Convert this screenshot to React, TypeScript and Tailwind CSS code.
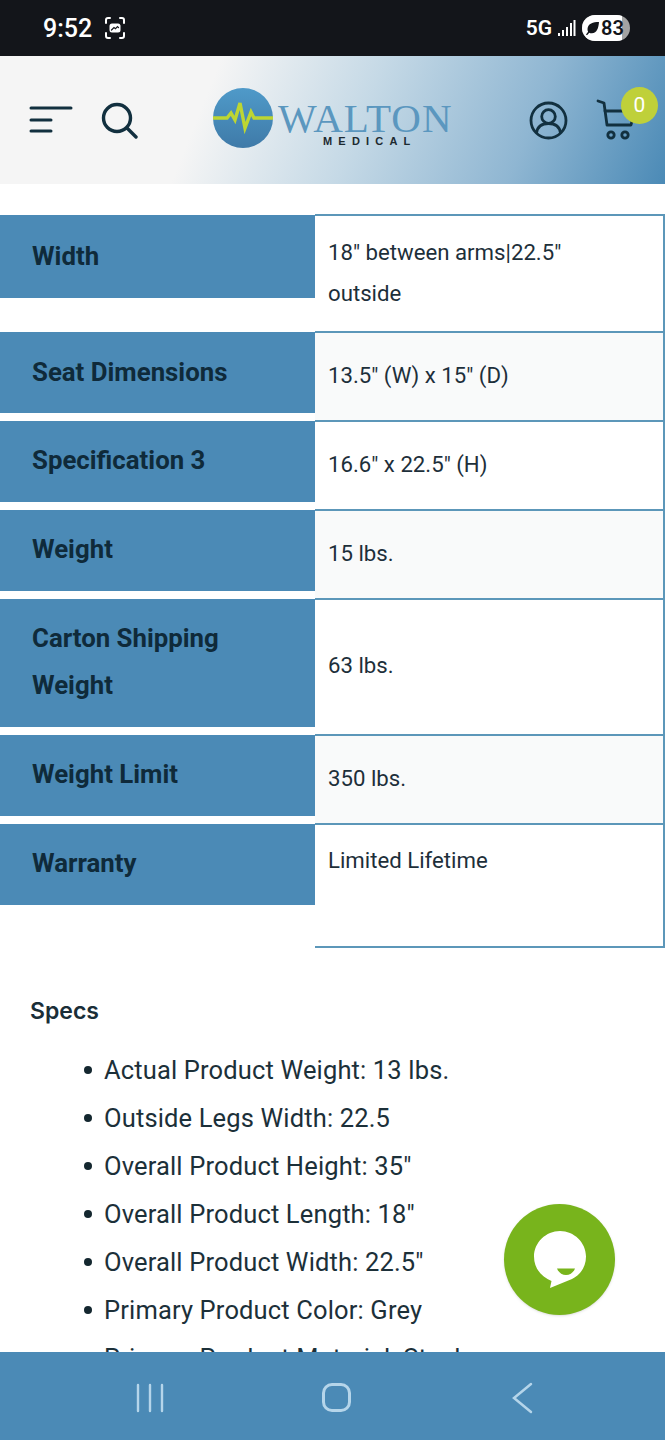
const rows = [
  { label: ["Width"], value: ['18" between arms|22.5"', "outside"], h: "h-[117px]", lh: "h-[83px]", top: "pt-[16px]", lt: "pt-[17px]", shade: false },
  { label: ["Seat Dimensions"], value: ['13.5" (W) x 15" (D)'], h: "h-[89px]", lh: "h-[81px]", top: "pt-[22px]", lt: "pt-[16px]", shade: true },
  { label: ["Specification 3"], value: ['16.6" x 22.5" (H)'], h: "h-[89px]", lh: "h-[81px]", top: "pt-[22px]", lt: "pt-[15px]", shade: false },
  { label: ["Weight"], value: ["15 lbs."], h: "h-[89px]", lh: "h-[81px]", top: "pt-[22px]", lt: "pt-[15px]", shade: true },
  { label: ["Carton Shipping", "Weight"], value: ["63 lbs."], h: "h-[136px]", lh: "h-[128px]", top: "pt-[45px]", lt: "pt-[15px]", shade: false },
  { label: ["Weight Limit"], value: ["350 lbs."], h: "h-[89px]", lh: "h-[81px]", top: "pt-[22px]", lt: "pt-[15px]", shade: true },
  { label: ["Warranty"], value: ["Limited Lifetime"], h: "h-[123px]", lh: "h-[81px]", top: "pt-[15px]", lt: "pt-[15px]", shade: false },
];

const specs = [
  "Actual Product Weight: 13 lbs.",
  "Outside Legs Width: 22.5",
  'Overall Product Height: 35"',
  'Overall Product Length: 18"',
  'Overall Product Width: 22.5"',
  "Primary Product Color: Grey",
  "Primary Product Material: Steel",
];

const StatusBar = () => (
  <div className="h-14 bg-[#13151a] flex items-center justify-between text-white font-['Roboto',sans-serif]">
    <div className="flex items-center gap-[12px] pl-[43px]">
      <span className="text-[25px] font-medium leading-none">9:52</span>
      <svg width="22" height="24" viewBox="0 0 22 24" fill="none" stroke="white" strokeWidth="2" strokeLinecap="round">
        <path d="M2 7V4a2 2 0 0 1 2-2h2M16 2h2a2 2 0 0 1 2 2v3M20 17v3a2 2 0 0 1-2 2h-2M6 22H4a2 2 0 0 1-2-2v-3" />
        <rect x="5.500" y="7.500" width="11" height="9" rx="2.500" fill="white" stroke="none" />
        <path d="M7.500 14l2.500-2.500 1.500 1.200 2-2 1 1" stroke="#13151a" strokeWidth="1.200" />
      </svg>
    </div>
    <div className="flex items-center pr-[35px]">
      <span className="text-[21px] font-semibold leading-none">5G</span>
      <svg className="ml-[6px]" width="18" height="18" viewBox="0 0 18 18" fill="white">
        <rect x="0" y="14" width="2" height="3" />
        <rect x="4" y="11" width="2" height="6" />
        <rect x="8" y="8" width="2" height="9" />
        <rect x="12" y="4" width="2" height="13" />
        <rect x="15.500" y="1" width="2" height="16" />
      </svg>
      <div className="ml-[6px] relative w-[48px] h-[26px] rounded-full overflow-hidden bg-[#a3a3a3]">
        <div className="w-[40px] h-full bg-white flex items-center pl-[3px]">
          <svg className="shrink-0" width="15" height="15" viewBox="0 0 15 15" fill="#13151a">
            <path d="M14 1C8 1 3 2.500 2.500 8c-.1 1 .2 2 .6 2.700L1 13.500l1 .8 2.300-2.600c.8.4 1.600.6 2.600.5C12 12 13.500 7 14 1z" />
          </svg>
        </div>
        <span className="absolute left-[19px] top-0 text-[#13151a] text-[20px] font-semibold leading-[26px]">83</span>
      </div>
    </div>
  </div>
);

const Header = () => (
  <div className="h-[128px] relative flex items-center bg-[linear-gradient(112deg,#f5f5f5_31%,#c5d9e6_54%,#8fb6d2_78%,#4b8ab6_100%)]">
    {/* menu */}
    <svg className="absolute left-[29px] top-[49px]" width="44" height="30" viewBox="0 0 44 30" fill="none" stroke="#12303f" strokeWidth="3" strokeLinecap="round">
      <path d="M2 3h40M2 15h20M2 26h20" />
    </svg>
    {/* search */}
    <svg className="absolute left-[100px] top-[45px]" width="40" height="38" viewBox="0 0 40 38" fill="none" stroke="#12303f" strokeWidth="3.400" strokeLinecap="round">
      <circle cx="17" cy="17" r="13.500" />
      <path d="M27 27l9 9" />
    </svg>
    {/* logo */}
    <div className="absolute left-[213px] top-[32px] w-[240px] h-[62px]">
      <svg className="absolute left-0 top-0" width="60" height="60" viewBox="0 0 60 60">
        <defs>
          <linearGradient id="ball" x1="0" y1="0" x2="0" y2="1">
            <stop offset="0" stopColor="#4f9ac9" />
            <stop offset="1" stopColor="#3f7aa8" />
          </linearGradient>
        </defs>
        <circle cx="30" cy="30" r="30" fill="url(#ball)" />
        <path d="M0 30h14l4-5 4 7 5-17 5 25 6-16 3 6h19" fill="none" stroke="#bdd632" strokeWidth="3.400" />
      </svg>
      <span className="absolute left-[65px] top-[13px] font-['Liberation_Serif',serif] text-[41px] leading-[34px] text-[#5b97bf] tracking-[1px] whitespace-nowrap">WALTON</span>
      <span className="absolute left-[110px] top-[48px] font-['Liberation_Sans',sans-serif] font-bold text-[11px] leading-[10px] text-[#1d2a30] tracking-[6.200px] whitespace-nowrap">MEDICAL</span>
    </div>
    {/* account */}
    <svg className="absolute left-[529px] top-[45px]" width="39" height="39" viewBox="0 0 39 39" fill="none" stroke="#12303f" strokeWidth="2.800">
      <circle cx="19.500" cy="19.500" r="17.500" />
      <circle cx="19.500" cy="15.500" r="6.800" />
      <path d="M7.500 32c1-7 5.500-9.500 12-9.500s11 2.500 12 9.500" />
    </svg>
    {/* cart */}
    <svg className="absolute left-[596px] top-[43px]" width="42" height="42" viewBox="0 0 42 42" fill="none" stroke="#12303f" strokeWidth="2.800" strokeLinecap="round" strokeLinejoin="round">
      <path d="M2 2l6 2 3 22h24l1-4" />
      <path d="M9 12h28" />
      <circle cx="15" cy="36" r="3.200" />
      <circle cx="29" cy="36" r="3.200" />
    </svg>
    <div className="absolute left-[621px] top-[31px] w-[37px] h-[37px] rounded-full bg-[#bfd03a] flex items-center justify-center font-['Roboto',sans-serif] text-white text-[21px] leading-none">
      0
    </div>
  </div>
);

const SpecsTable = () => (
  <div className="mt-[30px] font-['Roboto',sans-serif]">
    {rows.map((row) => (
      <div key={row.label[0]} className={`grid grid-cols-[315px_350px] ${row.h}`}>
        <div className={`${row.lh} mt-px bg-[#4b8ab6] pl-8 ${row.lt} text-[25.800px] font-bold leading-[48px] text-[#0f2a3a]`}>
          {row.label.map((line) => (
            <div key={line} className="h-[47px]">{line}</div>
          ))}
        </div>
        <div className={`border-t-2 border-r-2 border-[#5c97b9] pl-[13px] ${row.top} text-[22.200px] leading-[41px] text-[#1d2f3a] ${row.shade ? "bg-[#f9fafa]" : "bg-white"}`}>
          {row.value.map((line) => (
            <div key={line}>{line}</div>
          ))}
        </div>
      </div>
    ))}
    <div className="ml-[315px] h-[2px] bg-[#5c97b9]" />
  </div>
);

const SpecsList = () => (
  <div className="pl-[30px] pt-[48px] text-[#1a2e38]">
    <h4 className="font-['Inter',sans-serif] font-semibold text-[23px] leading-[30px]">Specs</h4>
    <ul className="mt-[20px] pl-[52px] list-none font-['Roboto',sans-serif] text-[25.500px] leading-[48px] tracking-[0.15px] text-[#1c3039]">
      {specs.map((item) => (
        <li key={item} className="flex items-center whitespace-nowrap">
          <span className="w-[8px] h-[8px] rounded-full bg-[#14272f] mr-[12px] shrink-0 ml-[2px]" />
          {item}
        </li>
      ))}
    </ul>
  </div>
);

const ChatButton = () => (
  <div className="absolute left-[504px] top-[1204px] w-[111px] h-[111px] rounded-full bg-[#78b41c] flex items-center justify-center shadow-sm">
    <svg width="111" height="111" viewBox="0 0 111 111">
      <path d="M56 27c14 0 26 11.500 26 25.500 0 11-6 18.500-14 22.500L46 84l1.500-7C38 73 30 65 30 52.500 30 38.500 42 27 56 27z" fill="white" />
      <path d="M53 64.500h18c-1.500 4-5 6.500-9 6.500s-7.500-2.500-9-6.500z" fill="#78b41c" />
    </svg>
  </div>
);

const NavBar = () => (
  <div className="absolute left-0 right-0 bottom-0 h-[88px] bg-[#4b8ab6]">
    <svg className="absolute left-[136px] top-[31px]" width="28" height="30" viewBox="0 0 28 30" fill="none" stroke="#b5d5ea" strokeWidth="2.400" strokeLinecap="round">
      <path d="M2 2v26M14 2v26M26 2v26" />
    </svg>
    <div className="absolute left-[322px] top-[31px] w-[29px] h-[29px] rounded-[10px] border-[3px] border-[#b5d5ea]" />
    <svg className="absolute left-[512px] top-[30px]" width="22" height="32" viewBox="0 0 22 32" fill="none" stroke="#b5d5ea" strokeWidth="2.500" strokeLinecap="round">
      <path d="M19 2L2 16l17 14" />
    </svg>
  </div>
);

export default function App() {
  return (
    <div className="relative w-[665px] h-[1440px] overflow-hidden bg-white">
      <StatusBar />
      <Header />
      <SpecsTable />
      <SpecsList />
      <ChatButton />
      <NavBar />
    </div>
  );
}
